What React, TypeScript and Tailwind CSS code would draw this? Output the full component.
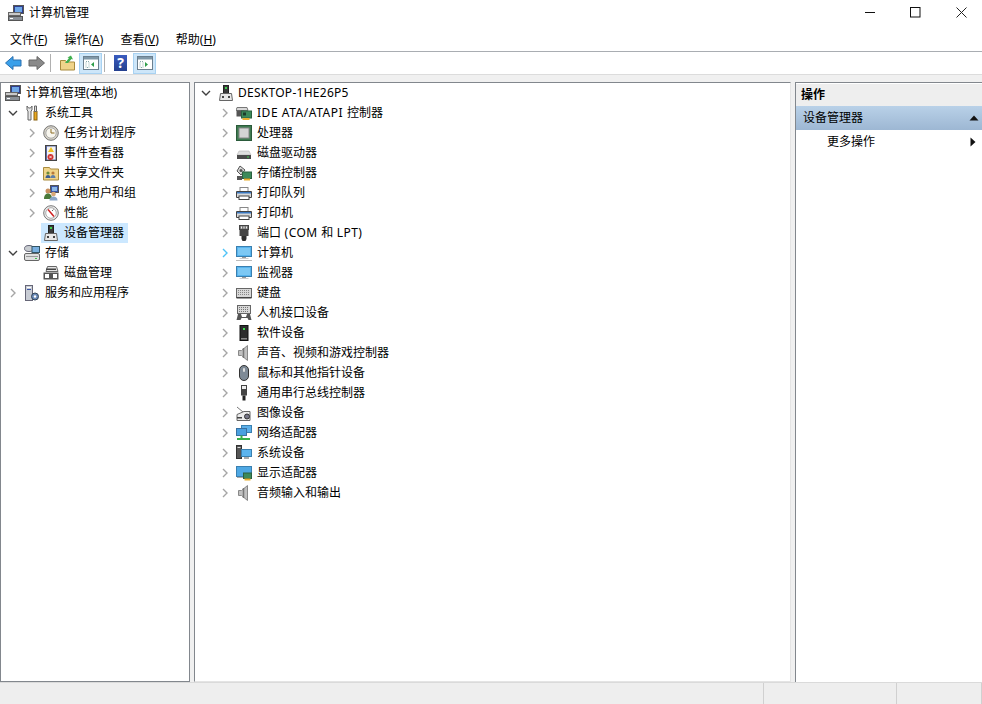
import type { ReactNode } from 'react';

const font = 'font-["Noto_Sans","Noto_Sans_CJK_SC",sans-serif]';

function Chevron({ kind }: { kind: 'open' | 'closed' | 'active' | 'none' }) {
  if (kind === 'none') return <span className="w-2 shrink-0" />;
  if (kind === 'open') {
    return (
      <svg width="10" height="10" viewBox="0 0 10 10" className="shrink-0">
        <path d="M1 3l4 4 4-4" fill="none" stroke="#404040" strokeWidth="1.4" />
      </svg>
    );
  }
  return (
    <svg width="10" height="10" viewBox="0 0 10 10" className="shrink-0">
      <path d="M3 1l4 4-4 4" fill="none" stroke={kind === 'active' ? '#4fc3f7' : '#a6a6a6'} strokeWidth="1.4" />
    </svg>
  );
}

function Svg({ children }: { children: ReactNode }) {
  return (
    <svg width="16" height="16" viewBox="0 0 16 16" className="shrink-0">
      {children}
    </svg>
  );
}

const Computer = () => (
  <Svg>
    <rect x="5.5" y="0.5" width="10" height="8" fill="#2f3f8f" stroke="#555" />
    <rect x="7" y="2" width="7" height="5" fill="#6fa8e8" />
    <rect x="0.5" y="7.5" width="12" height="3" fill="#c9c9c9" stroke="#666" />
    <rect x="0.5" y="11.5" width="14" height="4" fill="#8a9097" stroke="#555" />
    <rect x="2" y="13" width="3" height="1" fill="#fff" />
  </Svg>
);
const Tower = () => (
  <Svg>
    <rect x="5.5" y="0.5" width="5" height="8" fill="#3a3a3a" stroke="#222" />
    <rect x="7" y="2" width="2" height="2" fill="#3fd04f" />
    <path d="M2.5 8.5h11l1 7h-13z" fill="#e8e8e8" stroke="#666" />
    <rect x="4" y="11" width="2" height="2" fill="#444" />
    <rect x="10" y="11" width="2" height="2" fill="#444" />
  </Svg>
);
const Tools = () => (
  <Svg>
    <path d="M3 1v4l1 1v9h3V6l1-1V1L6.5 3h-2z" fill="#e6e6e6" stroke="#666" />
    <rect x="10" y="6.5" width="3" height="8.5" fill="#e9a820" stroke="#8a6210" />
    <path d="M10.5 1h2v5.500h-2z" fill="#ddd" stroke="#666" />
  </Svg>
);
const Clock = () => (
  <Svg>
    <circle cx="8" cy="8" r="7.3" fill="#d8d4c8" stroke="#777" />
    <circle cx="8" cy="8" r="5.2" fill="#f8f6ee" stroke="#aaa" />
    <path d="M8 4v4h3.5" fill="none" stroke="#8a6a20" strokeWidth="1" />
  </Svg>
);
const Events = () => (
  <Svg>
    <rect x="2.5" y="0.5" width="11" height="15" fill="#5a6aa8" stroke="#444" />
    <rect x="4" y="1.5" width="8.5" height="13" fill="#f2f2f2" />
    <path d="M8 2l3 5H5z" fill="#f0c020" />
    <circle cx="7.5" cy="12" r="3" fill="#d03030" />
    <path d="M6.3 10.8l2.4 2.4m0-2.4l-2.4 2.4" stroke="#fff" strokeWidth="0.8" />
  </Svg>
);
const Share = () => (
  <Svg>
    <path d="M0.5 2.5h6l1 1.5h8v11h-15z" fill="#f0d48a" stroke="#a98b3e" />
    <circle cx="5" cy="8" r="1.6" fill="#6b8a3a" />
    <path d="M2.5 13c0-2 1-3 2.500-3s2.500 1 2.500 3z" fill="#3f5f8f" />
    <circle cx="10" cy="8" r="1.6" fill="#b87a3a" />
    <path d="M7.500 13c0-2 1-3 2.500-3s2.500 1 2.500 3z" fill="#5f7fa8" />
  </Svg>
);
const Users = () => (
  <Svg>
    <rect x="7.5" y="0.5" width="8" height="7" fill="#3a56a8" stroke="#555" />
    <rect x="9" y="2" width="5" height="4" fill="#8ab8e8" />
    <circle cx="5" cy="6" r="2.5" fill="#c89060" />
    <path d="M1 14c0-4 2-5.500 4-5.500s4 1.500 4 5.500z" fill="#4a7a3a" />
    <circle cx="10.5" cy="9" r="2.3" fill="#d8a878" />
    <path d="M6.500 15.500c0-3 2-4 4-4s4 1 4 4z" fill="#8aa6c8" />
  </Svg>
);
const Gauge = () => (
  <Svg>
    <circle cx="8" cy="8" r="7.3" fill="#efefef" stroke="#777" />
    <circle cx="8" cy="8" r="5.3" fill="#fff" stroke="#aaa" />
    <path d="M5 4.500l6 7" stroke="#d02020" strokeWidth="1.5" />
    <path d="M10.500 4.500l-1.500 1.500" stroke="#666" />
  </Svg>
);
const Storage = () => (
  <Svg>
    <ellipse cx="5" cy="3.5" rx="4.5" ry="3" fill="#c8ccd0" stroke="#667" />
    <rect x="8" y="1.5" width="7.5" height="6" fill="#7ab0e0" stroke="#356" />
    <rect x="0.5" y="8.5" width="15" height="7" rx="1.5" fill="#e0e0e0" stroke="#666" />
    <rect x="2" y="11" width="12" height="1" fill="#999" />
    <rect x="11" y="13" width="2" height="1" fill="#3fc04f" />
  </Svg>
);
const DiskMgmt = () => (
  <Svg>
    <path d="M4.500 1.500h9l1.500 5h-12z" fill="#e4e4e4" stroke="#666" />
    <rect x="3" y="3.5" width="10" height="1.5" fill="#444" />
    <rect x="0.5" y="7.5" width="15" height="7" fill="#555" />
    <rect x="2" y="9" width="4" height="4" fill="#fff" />
    <rect x="10" y="9" width="4" height="4" fill="#fff" />
  </Svg>
);
const Services = () => (
  <Svg>
    <rect x="1.5" y="0.5" width="7" height="15" fill="#c8ccd4" stroke="#667" />
    <rect x="3" y="2" width="4" height="1" fill="#fff" />
    <rect x="3" y="4" width="4" height="1" fill="#3a56a8" />
    <circle cx="11" cy="11.5" r="3.5" fill="#6a8ab8" stroke="#345" />
    <circle cx="11" cy="11.5" r="1.2" fill="#fff" />
  </Svg>
);
const Ide = () => (
  <Svg>
    <path d="M1 2.500h10l1 3H0z" fill="#d8d8d8" stroke="#777" />
    <rect x="0.5" y="5.5" width="8" height="6" fill="#555" />
    <rect x="5.5" y="6" width="10" height="7" fill="#3c8a5a" stroke="#2a6040" />
    <rect x="7" y="7.5" width="3" height="3" fill="#1c3c2c" />
    <rect x="6.5" y="13" width="7" height="2" fill="#e8b030" />
  </Svg>
);
const Cpu = () => (
  <Svg>
    <rect x="0.5" y="0.5" width="15" height="15" fill="#3e7a50" stroke="#2a5a3a" />
    <rect x="3" y="3" width="10" height="10" fill="#d4d4d4" stroke="#888" />
  </Svg>
);
const Disk = () => (
  <Svg>
    <path d="M3 6h10l2 4H1z" fill="#e0e0e0" stroke="#aaa" strokeWidth="0.5" />
    <rect x="1" y="10" width="14" height="4" fill="#4a4a4a" />
    <rect x="11" y="11.5" width="2" height="1" fill="#40d050" />
  </Svg>
);
const StorageCtl = () => (
  <Svg>
    <path d="M4 1l5 4-4 5-4-4z" fill="#d8d8d8" stroke="#555" />
    <circle cx="5" cy="5.5" r="1.5" fill="#555" />
    <rect x="6.5" y="7" width="9" height="6.5" fill="#3c8a5a" stroke="#2a6040" />
    <rect x="1" y="11" width="5" height="4" fill="#555" />
    <rect x="8" y="13.5" width="6" height="2" fill="#e8b030" />
  </Svg>
);
const Printer = () => (
  <Svg>
    <rect x="4" y="2.5" width="8" height="4" fill="#fff" stroke="#888" />
    <path d="M0.500 6.500h15v6h-15z" fill="#d8d8d8" stroke="#444" />
    <rect x="1" y="7" width="14" height="1.5" fill="#3a78c0" />
    <rect x="3" y="11" width="10" height="3.5" fill="#fff" stroke="#444" />
  </Svg>
);
const Port = () => (
  <Svg>
    <rect x="3.5" y="0.5" width="9" height="4" fill="#777" stroke="#444" />
    <rect x="5" y="1.5" width="1" height="2" fill="#eee" />
    <rect x="7.5" y="1.5" width="1" height="2" fill="#eee" />
    <rect x="10" y="1.5" width="1" height="2" fill="#eee" />
    <rect x="3.5" y="5" width="9" height="6" fill="#444" />
    <path d="M5.500 11h5v3l-1 2h-3l-1-2z" fill="#2e2e2e" />
  </Svg>
);
const Monitor = ({ line }: { line?: boolean }) => (
  <Svg>
    <rect x="0.5" y="1.5" width="15" height="10" fill="#58b4ee" stroke="#3a80b0" />
    <rect x="2" y="3" width="12" height="7" fill="#7cc8f4" />
    <rect x="6" y="12" width="4" height="1" fill="#999" />
    <rect x="3.5" y="13" width="9" height="1" fill="#ccc" />
    {line && <rect x="0" y="15" width="16" height="1" fill="#bbb" />}
  </Svg>
);
const Keyboard = () => (
  <Svg>
    <rect x="0.5" y="3.5" width="15" height="9" fill="#d8d8d8" stroke="#666" />
    <path d="M2 5.500h12M2 7.500h12M2 9.500h12" stroke="#888" strokeDasharray="1 1" />
    <rect x="0.5" y="12" width="15" height="1.5" fill="#444" />
  </Svg>
);
const Hid = () => (
  <Svg>
    <rect x="1.5" y="0.5" width="13" height="8" fill="#d8d8d8" stroke="#666" />
    <path d="M3 2.500h10M3 4.500h10M3 6.500h10" stroke="#777" strokeDasharray="1 1" />
    <path d="M0.500 15l1.500-6h3l1 3h4l1-3h3l1.500 6h-3l-1-2h-6l-1 2z" fill="#555" />
  </Svg>
);
const Software = () => (
  <Svg>
    <rect x="4" y="0.5" width="8" height="15" fill="#2e2e2e" stroke="#111" />
    <rect x="7" y="3" width="2" height="2" fill="#40e050" />
    <rect x="5" y="13" width="6" height="1.5" fill="#888" />
  </Svg>
);
const Speaker = () => (
  <Svg>
    <path d="M2.500 5.500h3l6-5v15l-6-5h-3z" fill="#c0c0c0" stroke="#888" />
    <path d="M7.500 3v10" stroke="#777" strokeWidth="1.5" />
  </Svg>
);
const Mouse = () => (
  <Svg>
    <rect x="3.5" y="0.5" width="9" height="15" rx="4.5" fill="#7e8a96" stroke="#333" />
    <rect x="7" y="3" width="2" height="4" rx="1" fill="#ddd" />
  </Svg>
);
const Usb = () => (
  <Svg>
    <rect x="5.5" y="0.5" width="5" height="4" fill="#eee" stroke="#444" />
    <rect x="5" y="4.5" width="6" height="6" fill="#444" />
    <rect x="6.5" y="10.5" width="3" height="5" fill="#222" />
  </Svg>
);
const Imaging = () => (
  <Svg>
    <path d="M1 2l6 5" stroke="#777" />
    <path d="M1 9.500l7-3h6v9H1z" fill="#ececec" stroke="#666" />
    <circle cx="11" cy="11.5" r="2.5" fill="#778" stroke="#333" />
    <rect x="1" y="12" width="5" height="1.5" fill="#444" />
  </Svg>
);
const Network = () => (
  <Svg>
    <rect x="5.5" y="0.5" width="10" height="7" fill="#5cb0ea" stroke="#3a80b0" />
    <rect x="0.5" y="3.5" width="10" height="7" fill="#4aa0e0" stroke="#3a70a0" />
    <path d="M5.500 10.500v3M1 14h13" stroke="#38b048" strokeWidth="2" />
  </Svg>
);
const System = () => (
  <Svg>
    <rect x="0.5" y="0.5" width="5" height="13" fill="#555" stroke="#333" />
    <rect x="1.5" y="2" width="3" height="1" fill="#ddd" />
    <rect x="5.5" y="4.5" width="10" height="7" fill="#5cb4ee" stroke="#3a80b0" />
    <rect x="8" y="12" width="5" height="2" fill="#aaa" />
  </Svg>
);
const Display = () => (
  <Svg>
    <rect x="0.5" y="1.5" width="15" height="10" fill="#4ea8e4" stroke="#3a80b0" />
    <rect x="1" y="12" width="7" height="1" fill="#aaa" />
    <rect x="7.5" y="8" width="8" height="5.5" fill="#3c8a5a" stroke="#2a6040" />
    <rect x="8.5" y="13.5" width="6" height="2" fill="#e8b030" />
  </Svg>
);

type Row = { label: string; depth: number; chevron: 'open' | 'closed' | 'none'; icon: ReactNode; selected?: boolean };

const treeRows: Row[] = [
  { label: '计算机管理(本地)', depth: 0, chevron: 'none', icon: <Computer /> },
  { label: '系统工具', depth: 1, chevron: 'open', icon: <Tools /> },
  { label: '任务计划程序', depth: 2, chevron: 'closed', icon: <Clock /> },
  { label: '事件查看器', depth: 2, chevron: 'closed', icon: <Events /> },
  { label: '共享文件夹', depth: 2, chevron: 'closed', icon: <Share /> },
  { label: '本地用户和组', depth: 2, chevron: 'closed', icon: <Users /> },
  { label: '性能', depth: 2, chevron: 'closed', icon: <Gauge /> },
  { label: '设备管理器', depth: 2, chevron: 'none', icon: <Tower />, selected: true },
  { label: '存储', depth: 1, chevron: 'open', icon: <Storage /> },
  { label: '磁盘管理', depth: 2, chevron: 'none', icon: <DiskMgmt /> },
  { label: '服务和应用程序', depth: 1, chevron: 'closed', icon: <Services /> },
];

const devices: { key: string; label: ReactNode; icon: ReactNode; active?: boolean }[] = [
  { key: 'ide', label: <><span className="tracking-[0.55px]">IDE ATA/ATAPI </span>控制器</>, icon: <Ide /> },
  { key: 'cpu', label: '处理器', icon: <Cpu /> },
  { key: 'disk', label: '磁盘驱动器', icon: <Disk /> },
  { key: 'storage', label: '存储控制器', icon: <StorageCtl /> },
  { key: 'queue', label: '打印队列', icon: <Printer /> },
  { key: 'printer', label: '打印机', icon: <Printer /> },
  { key: 'port', label: <>端口<span className="tracking-[0.45px]"> (COM </span>和<span className="tracking-[0.45px]"> LPT)</span></>, icon: <Port /> },
  { key: 'computer', label: '计算机', icon: <Monitor line />, active: true },
  { key: 'monitor', label: '监视器', icon: <Monitor /> },
  { key: 'keyboard', label: '键盘', icon: <Keyboard /> },
  { key: 'hid', label: '人机接口设备', icon: <Hid /> },
  { key: 'software', label: '软件设备', icon: <Software /> },
  { key: 'sound', label: '声音、视频和游戏控制器', icon: <Speaker /> },
  { key: 'mouse', label: '鼠标和其他指针设备', icon: <Mouse /> },
  { key: 'usb', label: '通用串行总线控制器', icon: <Usb /> },
  { key: 'imaging', label: '图像设备', icon: <Imaging /> },
  { key: 'network', label: '网络适配器', icon: <Network /> },
  { key: 'system', label: '系统设备', icon: <System /> },
  { key: 'display', label: '显示适配器', icon: <Display /> },
  { key: 'audio', label: '音频输入和输出', icon: <Speaker /> },
];

const menus = [
  ['文件', 'F'],
  ['操作', 'A'],
  ['查看', 'V'],
  ['帮助', 'H'],
];

function PaneIcon({ arrow }: { arrow: 'left' | 'right' }) {
  return (
    <svg width="16" height="14" viewBox="0 0 16 14">
      <rect x="0.5" y="0.5" width="15" height="13" fill="#fff" stroke="#6b7f8f" />
      <rect x="1" y="1" width="14" height="2.5" fill="#7f97a8" />
      <path d="M3 5.500h3v6H3z" fill="none" stroke="#8aa" strokeDasharray="1 1" />
      {arrow === 'left' ? <path d="M11 6l-3 2.500 3 2.500z" fill="#2e9e4a" /> : <path d="M8 6l3 2.500-3 2.500z" fill="#2e9e4a" />}
    </svg>
  );
}

export default function App() {
  return (
    <div className={`${font} w-[982px] h-[704px] flex flex-col overflow-hidden bg-white text-xs text-black`}>
      {/* title bar */}
      <div className="h-[26px] shrink-0 flex items-center pl-2 bg-white">
        <Computer />
        <span className="ml-[5px]">计算机管理</span>
        <div className="ml-auto self-start mt-[7px] flex mr-[15px]">
          <svg width="11" height="11" viewBox="0 0 11 11" className="mr-[34px]"><path d="M0 5.500h10" stroke="#111" /></svg>
          <svg width="11" height="11" viewBox="0 0 11 11" className="mr-[35px]"><rect x="0.5" y="0.5" width="9.5" height="9.5" fill="none" stroke="#111" /></svg>
          <svg width="11" height="11" viewBox="0 0 11 11"><path d="M0.500 0.500l10 10m0-10l-10 10" stroke="#222" /></svg>
        </div>
      </div>

      {/* menu */}
      <div className="h-[26px] shrink-0 flex items-center pt-[3px] pl-[10px] gap-[17px] border-b border-[#a9adb2]">
        {menus.map(([name, key]) => (
          <span key={key}>
            {name}(<span className="underline">{key}</span>)
          </span>
        ))}
      </div>

      {/* toolbar */}
      <div className="h-[22px] shrink-0 flex items-center pl-[5px]">
        <svg width="17" height="14" viewBox="0 0 17 14"><path d="M8 0.500L0.500 7 8 13.500V10h8V4H8z" fill="#3aa0ea" stroke="#2a70b0" /></svg>
        <svg width="17" height="14" viewBox="0 0 17 14" className="ml-[6px]"><path d="M9 0.500L16.500 7 9 13.500V10H1V4h8z" fill="#8a8a8a" stroke="#666" /></svg>
        <span className="ml-[5px] w-px h-[18px] bg-[#b0b0b0]" />
        <svg width="15" height="16" viewBox="0 0 15 16" className="ml-[9px]">
          <path d="M0.500 5.500h5l1 1.500h8v8h-14z" fill="#f0d48a" stroke="#a98b3e" />
          <path d="M5 8l4-5-1.500-0.500L11 0.500l2 4-1.500-0.500L8 8z" fill="#3fb04f" />
        </svg>
        <span className="ml-[4px] w-[23px] h-[21px] flex items-center justify-center bg-[#cde6f9] border border-[#a8d2f2]"><PaneIcon arrow="left" /></span>
        <span className="ml-[2px] w-px h-[18px] bg-[#b0b0b0]" />
        <span className="ml-[9px] w-[13px] h-4 flex items-center justify-center bg-gradient-to-b from-[#3a5cc0] to-[#24408f] text-white font-bold text-sm leading-none">?</span>
        <span className="ml-[6px] w-[23px] h-[21px] flex items-center justify-center bg-[#cde6f9] border border-[#a8d2f2]"><PaneIcon arrow="right" /></span>
      </div>

      {/* panes */}
      <div className="flex-1 min-h-0 flex gap-1 bg-[#f0f0f0] pt-[7px] border-t border-[#dcdcdc]">
        <div className="w-[190px] shrink-0 bg-white border border-[#82878d]">
          {treeRows.map((r) => (
            <div key={r.label} className="h-5 flex items-center">
              <span className={r.depth === 0 ? 'w-[4px]' : r.depth === 1 ? 'w-[7px]' : 'w-[26px]'} />
              {r.depth > 0 && (
                <span className="w-[14px] flex"><Chevron kind={r.chevron} /></span>
              )}
              <span className={`flex items-center h-5 pr-1 ${r.depth > 0 ? 'pl-[2px]' : ''} ${r.selected ? 'bg-[#cce8ff]' : ''}`}>
                {r.icon}
                <span className="ml-[5px]">{r.label}</span>
              </span>
            </div>
          ))}
        </div>

        <div className="w-[597px] shrink-0 bg-white border border-[#82878d] border-b-[#e4e4e4] border-r-[#e4e4e4]">
          <div className="h-5 flex items-center pl-[6px]">
            <Chevron kind="open" />
            <span className="ml-[7px]"><Tower /></span>
            <span className="ml-[4px] tracking-[0.27px]">DESKTOP-1HE26P5</span>
          </div>
          {devices.map((d) => (
            <div key={d.key} className="h-5 flex items-center pl-[25px]">
              <Chevron kind={d.active ? 'active' : 'closed'} />
              <span className="ml-[6px]">{d.icon}</span>
              <span className="ml-[5px]">{d.label}</span>
            </div>
          ))}
        </div>

        <div className="flex-1 bg-white border-l border-t border-[#82878d] flex flex-col">
          <div className="h-[22px] mt-[1px] bg-[#eeeeee] font-bold flex items-center pl-[5px]">操作</div>
          <div className="h-6 bg-gradient-to-b from-[#b9d1e8] to-[#9db7d3] flex items-center pl-[7px] pr-[3px]">
            <span>设备管理器</span>
            <svg width="10" height="6" viewBox="0 0 10 6" className="ml-auto"><path d="M5 0.500L9.500 5.500H0.500z" fill="#111" /></svg>
          </div>
          <div className="h-6 flex items-center pl-[31px] pr-[6px]">
            <span>更多操作</span>
            <svg width="6" height="10" viewBox="0 0 6 10" className="ml-auto"><path d="M0.500 0.500L5.500 5 0.500 9.500z" fill="#111" /></svg>
          </div>
        </div>
      </div>

      {/* status bar */}
      <div className="h-[22px] shrink-0 flex bg-[#eeeeee] border-t border-[#dadada]">
        <div className="flex-1" />
        <div className="w-[133px] border-l border-[#d0d0d0]" />
        <div className="w-[86px] border-x border-[#d0d0d0]" />
      </div>
    </div>
  );
}
